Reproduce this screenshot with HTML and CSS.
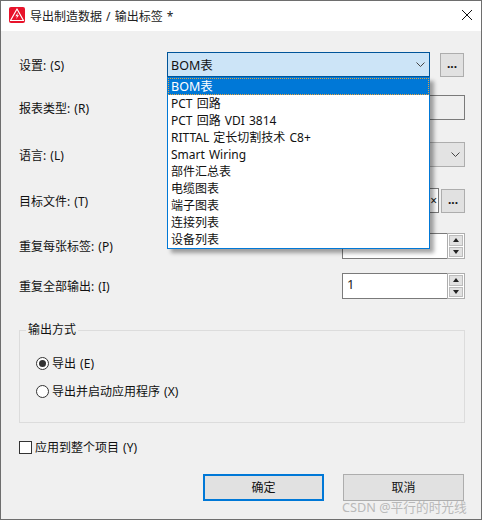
FILE: index.html
```html
<!DOCTYPE html>
<html>
<head>
    <title>导出制造数据 / 输出标签</title>
    <link rel="stylesheet" href="styles.css">
</head>
<body>
<div class="dialog">
    <div class="titlebar">
        <svg class="app-icon" width="16" height="16" viewBox="0 0 16 16">
            <rect x="0" y="0" width="16" height="16" rx="2" fill="#e8132b"/>
            <path d="M8 2 L14.5 13.5 H1.5 Z" fill="none" stroke="#fff" stroke-width="1.2" stroke-linejoin="round"/>
            <path d="M8.8 5.5 L6.4 9.3 H8.2 L7 12 L10 8.3 H8.3 Z" fill="#fff"/>
        </svg>
        <span class="title">导出制造数据 / 输出标签 *</span>
        <svg class="close" width="10" height="10" viewBox="0 0 10 10">
            <path d="M0 0 L10 10 M10 0 L0 10" stroke="#111" stroke-width="1" fill="none"/>
        </svg>
    </div>

    <div class="content">
        <div class="row">
            <label>设置: (S)</label>
            <div class="select select-open">
                <span>BOM表</span>
                <svg class="chev" width="9" height="5" viewBox="0 0 9 5"><path d="M0.5 0.5 L4.5 4.5 L8.5 0.5" fill="none" stroke="#444" stroke-width="1"/></svg>
            </div>
            <button class="dots">...</button>
        </div>
        <div class="row row-report">
            <label>报表类型: (R)</label>
            <div class="field field-disabled"></div>
        </div>
        <div class="row row-lang">
            <label>语言: (L)</label>
            <div class="select select-plain">
                <svg class="chev" width="9" height="5" viewBox="0 0 9 5"><path d="M0.5 0.5 L4.5 4.5 L8.5 0.5" fill="none" stroke="#444" stroke-width="1"/></svg>
            </div>
        </div>
        <div class="row row-target">
            <label>目标文件: (T)</label>
            <div class="field field-target"><span class="clear">×</span></div>
            <button class="dots">...</button>
        </div>
        <div class="row row-spin">
            <label>重复每张标签: (P)</label>
            <div class="spin">
                <div class="field spin-input"></div>
                <div class="spin-btns">
                    <div class="spin-btn"><i class="up"></i></div>
                    <div class="spin-btn"><i class="down"></i></div>
                </div>
            </div>
        </div>
        <div class="row row-spin row-spin2">
            <label>重复全部输出: (I)</label>
            <div class="spin">
                <div class="field spin-input">1</div>
                <div class="spin-btns">
                    <div class="spin-btn"><i class="up"></i></div>
                    <div class="spin-btn"><i class="down"></i></div>
                </div>
            </div>
        </div>

        <fieldset class="group">
            <legend>输出方式</legend>
            <div class="radio-row"><span class="radio radio-on"></span>导出 (E)</div>
            <div class="radio-row"><span class="radio"></span>导出并启动应用程序 (X)</div>
        </fieldset>

        <div class="check-row"><span class="check"></span>应用到整个项目 (Y)</div>

        <div class="actions">
            <button class="btn btn-default">确定</button>
            <button class="btn">取消</button>
        </div>
    </div>

    <ul class="popup">
        <li class="active">BOM表</li>
        <li>PCT 回路</li>
        <li>PCT 回路 VDI 3814</li>
        <li>RITTAL 定长切割技术 C8+</li>
        <li>Smart Wiring</li>
        <li>部件汇总表</li>
        <li>电缆图表</li>
        <li>端子图表</li>
        <li>连接列表</li>
        <li>设备列表</li>
    </ul>
</div>
<div class="watermark">CSDN @平行的时光线</div>
</body>
</html>
```

FILE: styles.css
```css
html, body { margin: 0; padding: 0; }
body {
    width: 483px; height: 521px; overflow: hidden; position: relative;
    background: #fff;
    font-family: "Noto Sans", "Noto Sans CJK SC", sans-serif;
    font-size: 12px; color: #111; word-spacing: 1px;
}
.dialog {
    position: relative; box-sizing: border-box;
    width: 482px; height: 520px;
    border: 1px solid #6e6e6e;
    background: #f0f0f0;
}

.titlebar {
    height: 30px; background: #fff;
    display: flex; align-items: center;
    padding: 0 9px 0 8px;
}
.app-icon { margin: 0 5px 2px 0; }
.close { margin-bottom: 2px; }
.title { flex: 1; font-size: 12px; color: #222; }

.content { padding: 21px 16px 0 18px; }
.row { display: flex; align-items: center; height: 25px; }
.row label { width: 148px; flex: none; }
.row-report { margin-top: 18px; }
.row-lang { margin-top: 22px; }
.row-target { margin-top: 21px; }
.row-spin { margin-top: 20px; height: 26px; }
.row-spin2 { margin-top: 14px; }

.select, .field { box-sizing: border-box; height: 25px; }
.select {
    display: flex; align-items: center; justify-content: space-between;
    padding: 0 4px 0 3px;
}
.select-open {
    width: 263px; background: #cce4f7; border: 1px solid #005499;
    font-size: 12.5px;
}
.select-plain {
    width: 298px; background: #e3e3e3; border: 1px solid #adadad;
    justify-content: flex-end;
}
.field { background: #fff; border: 1px solid #7a7a7a; }
.field-disabled { width: 298px; background: #efefef; }
.field-target {
    width: 272px; display: flex; align-items: center; justify-content: flex-end;
    padding-right: 1px;
}
.clear { font-size: 12px; line-height: 1; }

.dots {
    box-sizing: border-box; width: 24px; height: 24px; margin-left: 10px;
    padding: 0 0 3px; background: #e1e1e1; border: 1px solid #adadad;
    font: bold 12px "Noto Sans", sans-serif; color: #111;
}
.row-target .dots { margin-left: 2px; }

.spin { display: flex; margin-left: 175px; }
.spin-input {
    width: 105px; height: 26px; border-right: none;
    padding: 1px 4px; color: #222; font-size: 13px;
}
.spin-btns {
    box-sizing: border-box; width: 18px; height: 26px;
    border: 1px solid #adadad; background: #fff;
    display: flex; flex-direction: column; gap: 1px; padding: 1px;
}
.spin-btn {
    flex: 1; background: #e1e1e1; border: 1px solid #bcbcbc;
    display: flex; align-items: center; justify-content: center;
}
.spin-btn i { width: 0; height: 0; border-left: 3px solid transparent; border-right: 3px solid transparent; }
.spin-btn .up { border-bottom: 4px solid #222; }
.spin-btn .down { border-top: 4px solid #222; }

.group {
    box-sizing: border-box; width: 446px; height: 100px;
    margin: 24px 0 0; padding: 17px 0 0 16px;
    border: 1px solid #dcdcdc;
}
.group legend { padding: 0 2px; margin-left: -10px; line-height: 14px; }
.radio-row { display: flex; align-items: center; height: 18px; margin-bottom: 10px; }
.radio {
    box-sizing: border-box; width: 13px; height: 13px; margin-right: 3px;
    border: 1px solid #333; border-radius: 50%; background: #fff;
    display: flex; align-items: center; justify-content: center;
}
.radio-on::after { content: ""; width: 7px; height: 7px; border-radius: 50%; background: #333; }

.check-row { display: flex; align-items: center; height: 18px; margin-top: 15px; }
.check {
    box-sizing: border-box; width: 13px; height: 13px; margin-right: 3px;
    border: 1px solid #333; background: #fff;
}

.actions { display: flex; gap: 19px; justify-content: flex-end; margin-top: 18px; padding-right: 1px; }
.btn {
    box-sizing: border-box; width: 121px; height: 27px; padding: 0 0 2px;
    background: #e1e1e1; border: 1px solid #adadad;
    font: 12px "Noto Sans", "Noto Sans CJK SC", sans-serif; color: #111;
}
.btn-default { border: 2px solid #0078d7; }

.popup {
    position: absolute; left: 166px; top: 76px;
    box-sizing: border-box; width: 263px; height: 172px;
    margin: 0; padding: 0; list-style: none;
    background: #fff; border: 1px solid #0078d7;
    box-shadow: 4px 4px 4px rgba(0, 0, 0, 0.35);
    font-size: 12px;
}
.popup li { height: 17px; line-height: 17px; padding-left: 3px; white-space: nowrap; }
.popup .active { background: #0078d7; color: #fff; outline: 1px dotted #e8a33d; outline-offset: -1px; font-size: 12.5px; }

.watermark {
    position: absolute; left: 342px; top: 497px;
    font-size: 12.7px; color: #b9b9b9; white-space: nowrap;
    word-spacing: 0;
}
```
